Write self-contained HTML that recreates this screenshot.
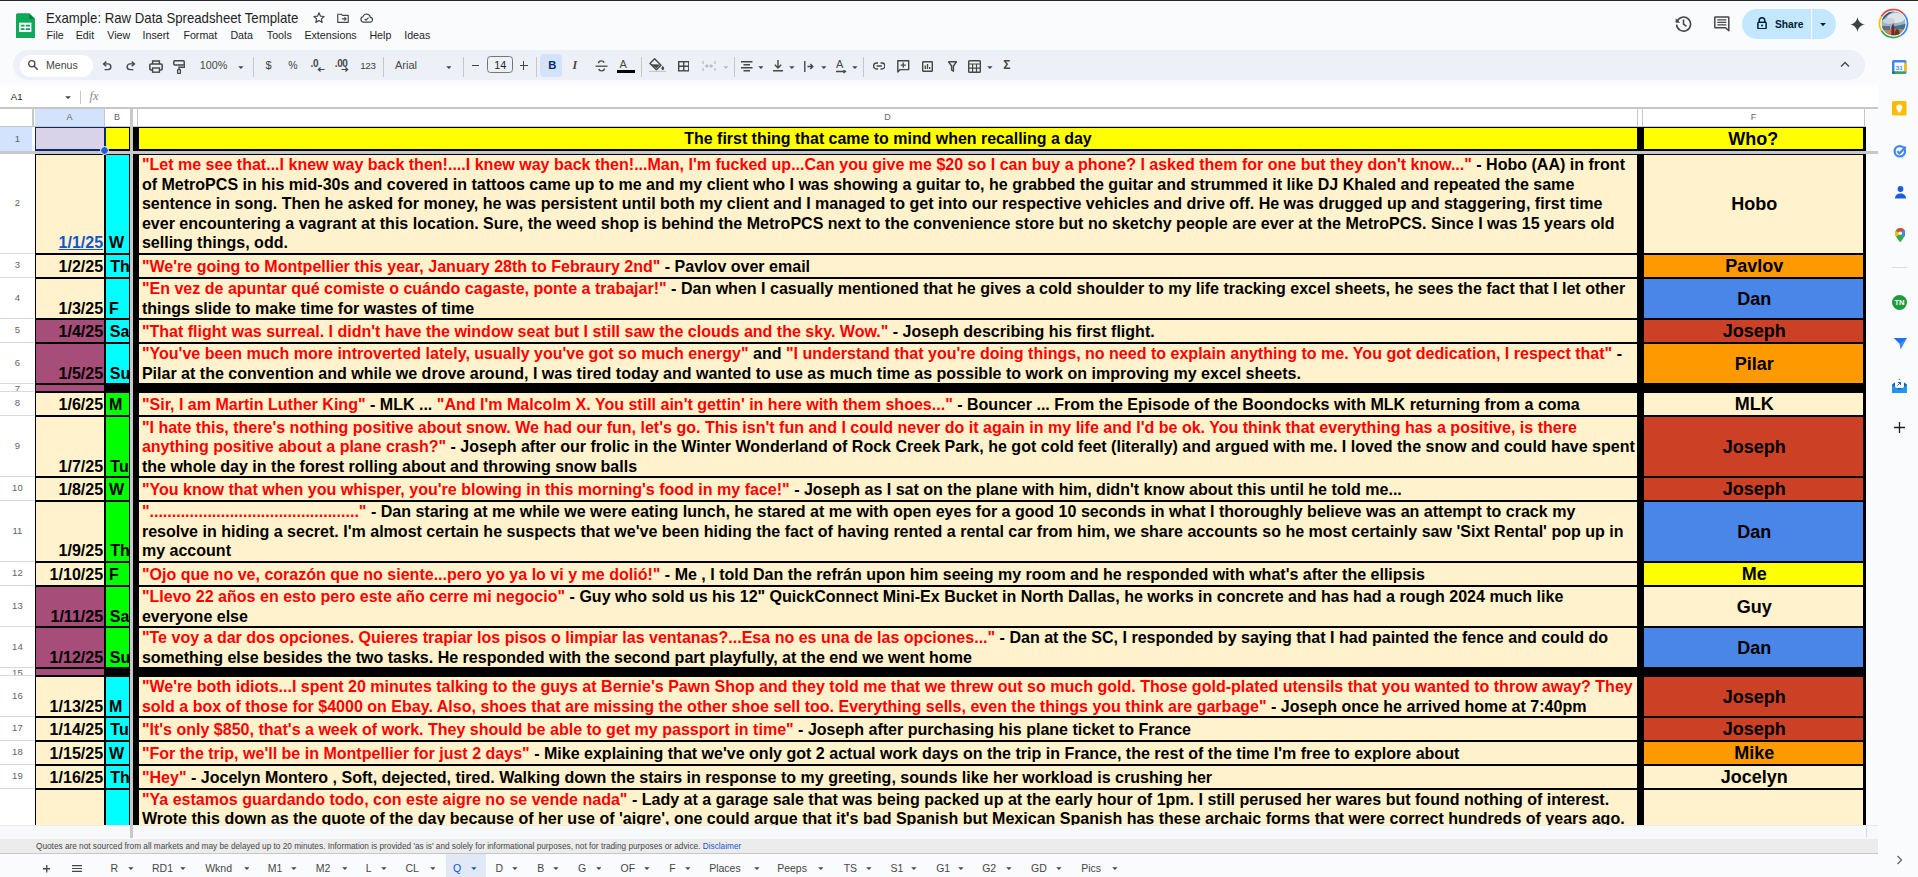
<!DOCTYPE html><html><head><meta charset="utf-8"><style>
*{margin:0;padding:0;box-sizing:border-box}
html,body{width:1918px;height:877px;overflow:hidden;background:#f9fbfd;font-family:"Liberation Sans",sans-serif;position:relative}
.a{position:absolute}
.t{position:absolute;white-space:pre;font-weight:bold;font-size:16.05px;line-height:20px;color:#000}
.r{color:#ff0000}
.rh{position:absolute;left:1.4px;width:32px;text-align:center;font-size:9.5px;color:#5f6368;line-height:12px}
.ch{position:absolute;text-align:center;font-size:9px;color:#5f6368;line-height:12px;top:111px}
.ic{position:absolute}
.tab{position:absolute;top:858.5px;font-size:10.5px;color:#444746;line-height:18px;white-space:pre}
.menu{position:absolute;top:27.8px;font-size:10.7px;color:#1f1f1f;line-height:14px;white-space:pre}
</style></head><body>
<div style="position:absolute;left:0.00px;top:0.00px;width:1918.00px;height:1.10px;background:#25272a;"></div>
<svg class="ic" style="left:16px;top:12.8px" width="19" height="25.6" viewBox="0 0 19.5 26">
<path d="M1.6 0h11.9l6 6v18.4a1.6 1.6 0 0 1-1.6 1.6H1.6A1.6 1.6 0 0 1 0 24.4V1.6A1.6 1.6 0 0 1 1.6 0z" fill="#0fa958"/>
<path d="M13.5 0l6 6h-4.4a1.6 1.6 0 0 1-1.6-1.6z" fill="#087f3f"/>
<path d="M3.2 9.8h12.6v9.6H3.2z" fill="#fff"/>
<path d="M4.9 11.8h3.9v1.9H4.9zM10 11.8h4.3v1.9H10zM4.9 15.5h3.9v1.8H4.9zM10 15.5h4.3v1.8H10z" fill="#0d9f52"/>
</svg>
<div class="a" style="left:46px;top:8.6px;font-size:14.6px;line-height:18px;color:#1f1f1f;white-space:pre;transform-origin:0 0;transform:scaleX(0.905)">Example: Raw Data Spreadsheet Template</div>
<svg class="ic" style="left:312px;top:11px" width="14" height="14" viewBox="0 0 24 24"><path d="M12 3.2l2.6 5.6 6.1.6-4.6 4.1 1.3 6-5.4-3.1-5.4 3.1 1.3-6-4.6-4.1 6.1-.6z" fill="none" stroke="#444746" stroke-width="2" stroke-linejoin="round"/></svg>
<svg class="ic" style="left:336px;top:11px" width="14" height="14" viewBox="0 0 24 24"><path d="M3 5.5h6l2 2h10v12H3z" fill="none" stroke="#444746" stroke-width="2" stroke-linejoin="round"/><path d="M10 13.5h7M14.5 10.5l3 3-3 3" fill="none" stroke="#444746" stroke-width="1.8"/></svg>
<svg class="ic" style="left:359px;top:11px" width="15" height="14" viewBox="0 0 24 24"><path d="M6.5 19h11.5a4 4 0 0 0 .6-8A6.5 6.5 0 0 0 6 9.6 4.8 4.8 0 0 0 6.5 19z" fill="none" stroke="#444746" stroke-width="2"/><path d="M8.8 13.5l2.4 2.4 4.4-4.4" fill="none" stroke="#444746" stroke-width="2"/></svg>
<div class="menu" style="left:46.6px">File</div>
<div class="menu" style="left:75.7px">Edit</div>
<div class="menu" style="left:107.3px">View</div>
<div class="menu" style="left:142.6px">Insert</div>
<div class="menu" style="left:183.4px">Format</div>
<div class="menu" style="left:230.4px">Data</div>
<div class="menu" style="left:266.8px">Tools</div>
<div class="menu" style="left:304.4px">Extensions</div>
<div class="menu" style="left:369.4px">Help</div>
<div class="menu" style="left:404.2px">Ideas</div>
<svg class="ic" style="left:1675px;top:15px" width="17" height="17" viewBox="0 0 17 17"><path d="M2.2 6.2A7 7 0 1 1 1.6 9.6" fill="none" stroke="#444746" stroke-width="1.6"/><path d="M0.6 3.2v4.6h4.6z" fill="#444746"/><path d="M8.5 4.6v4.5l3 2.2" fill="none" stroke="#444746" stroke-width="1.6"/></svg>
<svg class="ic" style="left:1713.5px;top:15.6px" width="16" height="16" viewBox="0 0 16 16"><path d="M1.4 0.9h12.8a0.6 0.6 0 0 1 0.6 0.6v13.3l-3.2-3H1.4a0.6 0.6 0 0 1-0.6-0.6V1.5a0.6 0.6 0 0 1 0.6-0.6z" fill="none" stroke="#444746" stroke-width="1.5" stroke-linejoin="round"/><path d="M3.3 3.8h9M3.3 6.3h9M3.3 8.8h9" stroke="#444746" stroke-width="1.3"/></svg>
<div class="a" style="left:1742px;top:9.2px;width:94px;height:30px;border-radius:15px;background:#c2e7ff"></div>
<div class="a" style="left:1811px;top:9.2px;width:1px;height:30px;background:#f9fbfd"></div>
<svg class="ic" style="left:1756.5px;top:16.8px" width="10" height="12.4" viewBox="0 0 10 12.4"><path d="M2.2 5.4V3.6a2.8 2.8 0 0 1 5.6 0v1.8" fill="none" stroke="#001d35" stroke-width="1.5"/><rect x="0.9" y="5.3" width="8.2" height="6.4" rx="0.8" fill="none" stroke="#001d35" stroke-width="1.5"/><circle cx="5" cy="8.5" r="1" fill="#001d35"/></svg>
<div class="a" style="left:1775px;top:17px;font-size:10.8px;line-height:14px;color:#001d35;font-weight:bold;transform-origin:0 0;transform:scaleX(0.95)">Share</div>
<svg class="ic" style="left:1819.8px;top:22.6px" width="6" height="3.4" viewBox="0 0 6 3.4"><path d="M0.1 0.1h5.8L3 3.2z" fill="#001d35"/></svg>
<svg class="ic" style="left:1849.5px;top:16.5px" width="15" height="15" viewBox="0 0 24 24"><path d="M12 0C12.8 6.6 17.4 11.2 24 12 17.4 12.8 12.8 17.4 12 24 11.2 17.4 6.6 12.8 0 12 6.6 11.2 11.2 6.6 12 0z" fill="#3c4043"/></svg>
<svg class="ic" style="left:1877.6px;top:8.4px" width="31" height="31" viewBox="0 0 31 31">
<defs><clipPath id="av"><circle cx="15.5" cy="15.5" r="11.9"/></clipPath></defs>
<path d="M3.38 8.50A14.0 14.0 0 0 1 25.40 5.60" stroke="#ea4335" stroke-width="1.7" fill="none"/><path d="M25.40 5.60A14.0 14.0 0 0 1 22.50 27.62" stroke="#4285f4" stroke-width="1.7" fill="none"/><path d="M22.50 27.62A14.0 14.0 0 0 1 3.38 22.50" stroke="#34a853" stroke-width="1.7" fill="none"/><path d="M3.38 22.50A14.0 14.0 0 0 1 3.38 8.50" stroke="#fbbc04" stroke-width="1.7" fill="none"/>
<g clip-path="url(#av)">
<rect x="0" y="0" width="31" height="31" fill="#9fb3c2"/>
<path d="M2 12C4 6 9 3 17 3 12 5 8 8 5 12z" fill="#1f5f8f"/>
<ellipse cx="18" cy="10" rx="9" ry="5" fill="#dfe4e8"/>
<ellipse cx="11" cy="13" rx="6" ry="3" fill="#c8d2d8"/>
<path d="M13 19L31 15v6H13z" fill="#3b7598"/>
<path d="M0 21h31v10H0z" fill="#c4805a"/>
<path d="M0 18h12v4H0z" fill="#5b6f86"/>
<path d="M13.2 27l0.6-9 1.3-2.5 1.1 2.5 0.3 9z" fill="#7b2430"/>
<path d="M16 27l2-6 3 1 1 5z" fill="#5a3a20"/>
</g></svg>
<div class="a" style="left:12.5px;top:50.3px;width:1852.5px;height:29.9px;border-radius:15px;background:#edf1f7"></div>
<div class="a" style="left:20px;top:54.5px;width:72.5px;height:22px;border-radius:11px;background:#ffffff"></div>
<svg class="ic" style="left:26.5px;top:59px" width="12" height="12" viewBox="0 0 24 24"><circle cx="9.5" cy="9.5" r="6.2" fill="none" stroke="#444746" stroke-width="2.6"/><path d="M14 14l7.5 7.5" stroke="#444746" stroke-width="2.8"/></svg>
<div class="a" style="left:46px;top:59px;font-size:10.6px;line-height:13px;color:#444746">Menus</div>
<svg class="ic" style="left:102.3px;top:61.4px" width="10" height="10" viewBox="0 0 10 10"><path d="M1.8 2.9h4.2a2.85 2.85 0 0 1 0 5.7H2.6" fill="none" stroke="#444746" stroke-width="1.4"/><path d="M4.3 0.6L1.6 2.9l2.7 2.3" fill="none" stroke="#444746" stroke-width="1.4"/></svg>
<svg class="ic" style="left:125.8px;top:61.4px" width="10" height="10" viewBox="0 0 10 10"><path d="M8.2 2.9H4a2.85 2.85 0 0 0 0 5.7h3.4" fill="none" stroke="#444746" stroke-width="1.4"/><path d="M5.7 0.6l2.7 2.3-2.7 2.3" fill="none" stroke="#444746" stroke-width="1.4"/></svg>
<svg class="ic" style="left:148.5px;top:59.5px" width="14" height="13" viewBox="0 0 14 13"><path d="M3.6 4V1h6.8v3" fill="none" stroke="#444746" stroke-width="1.4"/><rect x="0.8" y="4" width="12.4" height="6" rx="1.2" fill="none" stroke="#444746" stroke-width="1.5"/><rect x="3.6" y="8" width="6.8" height="4.2" fill="#edf1f7" stroke="#444746" stroke-width="1.4"/></svg>
<svg class="ic" style="left:173px;top:59.5px" width="12" height="14" viewBox="0 0 12 14"><rect x="0.8" y="0.8" width="10.4" height="4.2" rx="0.8" fill="none" stroke="#444746" stroke-width="1.4"/><path d="M11.2 3H11.8V7.2H6v2.6" fill="none" stroke="#444746" stroke-width="1.4"/><rect x="4.6" y="9.6" width="2.8" height="3.8" rx="0.5" fill="none" stroke="#444746" stroke-width="1.3"/></svg>
<div class="a" style="left:199.8px;top:59.4px;font-size:10.8px;line-height:13px;color:#444746">100%</div>
<svg class="ic" style="left:237.8px;top:65.6px" width="5.8" height="3.1" viewBox="0 0 5.8 3.1"><path d="M0.2 0.2h5.40l-2.70 2.70z" fill="#444746"/></svg>
<div class="a" style="left:253px;top:57px;width:1px;height:20px;background:#c7c7c7"></div>
<div class="a" style="left:383px;top:57px;width:1px;height:20px;background:#c7c7c7"></div>
<div class="a" style="left:463.3px;top:57px;width:1px;height:20px;background:#c7c7c7"></div>
<div class="a" style="left:536px;top:57px;width:1px;height:20px;background:#c7c7c7"></div>
<div class="a" style="left:641px;top:57px;width:1px;height:20px;background:#c7c7c7"></div>
<div class="a" style="left:733.5px;top:57px;width:1px;height:20px;background:#c7c7c7"></div>
<div class="a" style="left:863px;top:57px;width:1px;height:20px;background:#c7c7c7"></div>
<div class="a" style="left:265.6px;top:58.8px;font-size:11px;line-height:13px;color:#3c4043;font-weight:normal">$</div>
<div class="a" style="left:288.2px;top:58.6px;font-size:10.5px;line-height:13px;color:#3c4043;font-weight:normal">%</div>
<div class="a" style="left:310.5px;top:57.5px;font-size:10px;line-height:12px;color:#444746;font-weight:bold;letter-spacing:-0.3px">.0</div>
<svg class="ic" style="left:317px;top:66.5px" width="8" height="5" viewBox="0 0 8 5"><path d="M7.5 2.5H1.5M3.6 0.5L1.3 2.5l2.3 2" fill="none" stroke="#444746" stroke-width="1.2"/></svg>
<div class="a" style="left:334.8px;top:57.5px;font-size:10px;line-height:12px;color:#444746;font-weight:bold;letter-spacing:-0.4px">.00</div>
<svg class="ic" style="left:341px;top:66.5px" width="8" height="5" viewBox="0 0 8 5"><path d="M0.5 2.5h6M4.4 0.5l2.3 2-2.3 2" fill="none" stroke="#444746" stroke-width="1.2"/></svg>
<div class="a" style="left:360.2px;top:59.5px;font-size:9.8px;line-height:12px;color:#3c4043;font-weight:normal;letter-spacing:-0.3px">123</div>
<div class="a" style="left:395px;top:59.4px;font-size:11px;line-height:13px;color:#444746">Arial</div>
<svg class="ic" style="left:445.6px;top:65.6px" width="5.8" height="3.1" viewBox="0 0 5.8 3.1"><path d="M0.2 0.2h5.40l-2.70 2.70z" fill="#444746"/></svg>
<div class="a" style="left:471.5px;top:65px;width:7.5px;height:1.4px;background:#444746"></div>
<div class="a" style="left:487.2px;top:56.3px;width:26px;height:17.2px;border:1px solid #747775;border-radius:3.5px"></div>
<div class="a" style="left:487.2px;top:58.8px;width:26px;text-align:center;font-size:10.8px;line-height:13px;color:#1f1f1f">14</div>
<div class="a" style="left:519.8px;top:65px;width:8px;height:1.4px;background:#444746"></div><div class="a" style="left:523.1px;top:61.3px;width:1.4px;height:8.3px;background:#444746"></div>
<div class="a" style="left:540px;top:54.4px;width:22.2px;height:22.2px;border-radius:4px;background:#d3e3fd"></div>
<div class="a" style="left:548.2px;top:59.2px;font-size:11.2px;line-height:13px;color:#0b2a6b;font-weight:bold">B</div>
<div class="a" style="left:572.5px;top:59.2px;font-size:12px;line-height:13px;color:#444746;font-style:italic;font-family:'Liberation Serif',serif;font-weight:bold">I</div>
<svg class="ic" style="left:594.5px;top:59.5px" width="13" height="12" viewBox="0 0 13 12"><path d="M0.5 6.2h12" stroke="#444746" stroke-width="1.3"/><path d="M9.2 2.6C8.6 1.4 7.5 0.9 6.3 0.9 4.6 0.9 3.5 1.8 3.5 3.2M3.6 9c.5 1.2 1.6 1.9 2.9 1.9 1.7 0 2.9-.9 2.9-2.3" fill="none" stroke="#444746" stroke-width="1.4"/></svg>
<div class="a" style="left:619.4px;top:57.5px;font-size:11px;line-height:13px;color:#444746">A</div>
<div class="a" style="left:617px;top:70.2px;width:18px;height:2.4px;background:#000"></div>
<svg class="ic" style="left:649px;top:58px" width="17" height="15" viewBox="0 0 17 15"><path d="M5.6 0.8l6.4 6.4-4.6 4.6L1 5.4z" fill="none" stroke="#444746" stroke-width="1.4" stroke-linejoin="round"/><path d="M1.8 6.2l9.6 0.2-4 3.8z" fill="#444746"/><path d="M13.8 7.8c.9 1.3 1.4 2.1 1.4 2.7a1.4 1.4 0 0 1-2.8 0c0-.6.5-1.4 1.4-2.7z" fill="#444746"/><path d="M0 13.4h17" stroke="#c7c7c7" stroke-width="1.2"/></svg>
<svg class="ic" style="left:677.5px;top:61px" width="11.5" height="10.5" viewBox="0 0 11.5 10.5"><rect x="0.7" y="0.7" width="10.1" height="9.1" fill="none" stroke="#444746" stroke-width="1.4"/><path d="M5.75 0.7v9.1M0.7 5.25h10.1" stroke="#444746" stroke-width="1.4"/></svg>
<svg class="ic" style="left:702px;top:60px" width="14" height="12" viewBox="0 0 14 12"><path d="M1 1v3M1 8v3M13 1v3M13 8v3M3 6h3M8 6h3M4.5 4.5L6 6 4.5 7.5M9.5 4.5L8 6l1.5 1.5" fill="none" stroke="#b9bcc1" stroke-width="1.3"/></svg>
<svg class="ic" style="left:722.5px;top:65.6px" width="5.8" height="3.1" viewBox="0 0 5.8 3.1"><path d="M0.2 0.2h5.40l-2.70 2.70z" fill="#b9bcc1"/></svg>
<svg class="ic" style="left:741px;top:60.5px" width="11.5" height="11" viewBox="0 0 11.5 11"><path d="M0 0.8h11.5M2.5 3.8h6.5M0 6.8h11.5M2.5 9.8h6.5" stroke="#444746" stroke-width="1.4"/></svg>
<svg class="ic" style="left:757.5px;top:65.6px" width="5.8" height="3.1" viewBox="0 0 5.8 3.1"><path d="M0.2 0.2h5.40l-2.70 2.70z" fill="#444746"/></svg>
<svg class="ic" style="left:773px;top:60px" width="10" height="12" viewBox="0 0 10 12"><path d="M5 0v7.8M1.8 4.8L5 8l3.2-3.2M0 10.8h10" fill="none" stroke="#444746" stroke-width="1.4"/></svg>
<svg class="ic" style="left:788.8px;top:65.6px" width="5.8" height="3.1" viewBox="0 0 5.8 3.1"><path d="M0.2 0.2h5.40l-2.70 2.70z" fill="#444746"/></svg>
<svg class="ic" style="left:804px;top:60.5px" width="10" height="11" viewBox="0 0 10 11"><path d="M0.8 0v11M3.5 5.5h5M6.3 3l2.5 2.5-2.5 2.5" fill="none" stroke="#444746" stroke-width="1.4"/></svg>
<svg class="ic" style="left:820.5px;top:65.6px" width="5.8" height="3.1" viewBox="0 0 5.8 3.1"><path d="M0.2 0.2h5.40l-2.70 2.70z" fill="#444746"/></svg>
<div class="a" style="left:836px;top:58px;font-size:11px;line-height:13px;color:#444746">A</div>
<svg class="ic" style="left:836px;top:69.5px" width="11" height="4" viewBox="0 0 11 4"><path d="M0 1.5h9M7.5 0l2 1.5-2 1.5" fill="none" stroke="#444746" stroke-width="1.3"/></svg>
<svg class="ic" style="left:851.8px;top:65.6px" width="5.8" height="3.1" viewBox="0 0 5.8 3.1"><path d="M0.2 0.2h5.40l-2.70 2.70z" fill="#444746"/></svg>
<svg class="ic" style="left:872.5px;top:62px" width="12.5" height="8" viewBox="0 0 12.5 8"><path d="M5 1H3.6a3 3 0 0 0 0 6H5M7.5 1h1.4a3 3 0 0 1 0 6H7.5M3.6 4h5.3" fill="none" stroke="#444746" stroke-width="1.4"/></svg>
<svg class="ic" style="left:897px;top:59.5px" width="12.5" height="13" viewBox="0 0 12.5 13"><path d="M0.8 0.8h10.9v8.8H3.2L0.8 12z" fill="none" stroke="#444746" stroke-width="1.4" stroke-linejoin="round"/><path d="M6.25 2.6v5.2M3.65 5.2h5.2" stroke="#444746" stroke-width="1.3"/></svg>
<svg class="ic" style="left:922px;top:60.5px" width="11" height="11" viewBox="0 0 11 11"><rect x="0.7" y="0.7" width="9.6" height="9.6" rx="0.6" fill="none" stroke="#444746" stroke-width="1.4"/><path d="M3.3 4.5v3.6M5.5 3v5.1M7.7 6v2.1" stroke="#444746" stroke-width="1.3"/></svg>
<svg class="ic" style="left:947.5px;top:60.5px" width="9" height="11" viewBox="0 0 9 11"><path d="M0.6 0.8h7.8L5.4 5v5.2L3.6 9V5z" fill="none" stroke="#444746" stroke-width="1.4" stroke-linejoin="round"/></svg>
<svg class="ic" style="left:968px;top:60px" width="13" height="13" viewBox="0 0 13 13"><rect x="0.7" y="0.7" width="11.6" height="11.6" rx="0.8" fill="none" stroke="#444746" stroke-width="1.4"/><path d="M0.7 4h11.6M4.6 4v8.3M8.5 4v8.3M0.7 8.2h11.6" stroke="#444746" stroke-width="1.2"/></svg>
<svg class="ic" style="left:986.8px;top:65.6px" width="5.8" height="3.1" viewBox="0 0 5.8 3.1"><path d="M0.2 0.2h5.40l-2.70 2.70z" fill="#444746"/></svg>
<div class="a" style="left:1003.3px;top:59px;font-size:12px;line-height:13px;color:#444746;font-weight:bold">&#931;</div>
<svg class="ic" style="left:1840px;top:61px" width="10" height="7" viewBox="0 0 10 7"><path d="M1 5.5l4-4 4 4" fill="none" stroke="#444746" stroke-width="1.4"/></svg>
<div style="position:absolute;left:0.00px;top:85.00px;width:1878.00px;height:22.00px;background:#ffffff;"></div>
<div class="a" style="left:10.8px;top:90.6px;font-size:9.6px;line-height:12px;color:#1f1f1f">A1</div>
<svg class="ic" style="left:65.2px;top:95.9px" width="6.2" height="3.3" viewBox="0 0 6.2 3.3"><path d="M0.2 0.2h5.80l-2.90 2.90z" fill="#444746"/></svg>
<div class="a" style="left:80.2px;top:91px;width:1px;height:12.6px;background:#c7c7c7"></div>
<div class="a" style="left:89.5px;top:88.5px;font-size:12.4px;line-height:15px;color:#8c8c8c;font-style:italic;font-family:'Liberation Serif',serif">fx</div>
<svg class="ic" style="left:1892px;top:59.6px" width="14.5" height="14" viewBox="0 0 14.5 14"><rect x="0" y="0" width="14.5" height="14" rx="1.5" fill="#4285f4"/><rect x="2.5" y="2.5" width="9.5" height="9" fill="#fff"/><rect x="12" y="2.5" width="2.5" height="9" fill="#fbbc04"/><rect x="2.5" y="11.5" width="9.5" height="2.5" fill="#34a853"/><path d="M0 11.5h2.5V14H1.5A1.5 1.5 0 0 1 0 12.5z" fill="#188038"/><text x="7.2" y="10" font-size="6.2" font-family="Liberation Sans" text-anchor="middle" fill="#4285f4" font-weight="bold">31</text></svg>
<svg class="ic" style="left:1892px;top:101.4px" width="14.5" height="14.5" viewBox="0 0 14.5 14.5"><rect x="0" y="0" width="14.5" height="14.5" rx="1.6" fill="#fbbc04"/><circle cx="7.25" cy="6.5" r="3" fill="#fff"/><rect x="5.8" y="9" width="2.9" height="2.3" fill="#fff"/></svg>
<svg class="ic" style="left:1892.5px;top:144px" width="14" height="14" viewBox="0 0 14 14"><circle cx="6.8" cy="7.3" r="5.2" fill="none" stroke="#4285f4" stroke-width="2.2"/><path d="M4.3 7.2l2.2 2.2 6.2-6.6" fill="none" stroke="#4285f4" stroke-width="2.2"/></svg>
<svg class="ic" style="left:1894.5px;top:186px" width="11" height="13" viewBox="0 0 11 13"><circle cx="5.5" cy="3" r="2.9" fill="#1a5fd8"/><path d="M0 12.6c0-3.2 2.4-5 5.5-5s5.5 1.8 5.5 5z" fill="#1a5fd8"/></svg>
<svg class="ic" style="left:1894.5px;top:227.5px" width="10.5" height="14.5" viewBox="0 0 10.5 14.5"><path d="M5.25 14.5C3 11 0 8.5 0 5.25a5.25 5.25 0 0 1 10.5 0C10.5 8.5 7.5 11 5.25 14.5z" fill="#34a853"/><path d="M1.4 2A5.25 5.25 0 0 1 9 1.5L5.25 5.25z" fill="#ea4335"/><path d="M9 1.5A5.25 5.25 0 0 1 10.5 5.25C10.5 6.5 10 7.7 9.2 8.8L5.25 5.25z" fill="#4285f4"/><path d="M0.6 3L5.25 5.25 1.4 8.8C.6 7.8 0 6.5 0 5.25 0 4.4.2 3.7.6 3z" fill="#fbbc04"/><circle cx="5.25" cy="5.25" r="1.8" fill="#fff"/></svg>
<div style="position:absolute;left:1892.00px;top:267.00px;width:15.00px;height:1.00px;background:#dadce0;"></div>
<svg class="ic" style="left:1892px;top:294.5px" width="15" height="15" viewBox="0 0 15 15"><circle cx="7.5" cy="7.5" r="7.5" fill="#1e9c3b"/><text x="7.5" y="10.4" font-size="7.6" font-family="Liberation Sans" text-anchor="middle" fill="#fff" font-weight="bold">TN</text></svg>
<svg class="ic" style="left:1893.5px;top:337.5px" width="13" height="11.5" viewBox="0 0 13 11.5"><path d="M0 0h13L6.5 11.5 5.5 5.5z" fill="#4285f4"/><path d="M0 0l5.5 5.5L13 0z" fill="#1a73e8"/></svg>
<svg class="ic" style="left:1892px;top:378px" width="15" height="15" viewBox="0 0 15 15"><path d="M0 6.5L7.5 1 15 6.5V15H0z" fill="#1565c0"/><rect x="3" y="2" width="9" height="8" fill="#fff"/><path d="M5.5 7.5l3-3M6 4.5h2.5V7" fill="none" stroke="#1565c0" stroke-width="1"/><path d="M0 7l7.5 5L15 7v8H0z" fill="#2196f3"/></svg>
<svg class="ic" style="left:1894px;top:422px" width="11" height="11" viewBox="0 0 11 11"><path d="M5.5 0v11M0 5.5h11" stroke="#1f1f1f" stroke-width="1.3"/></svg>
<svg class="ic" style="left:1896px;top:855px" width="7" height="10" viewBox="0 0 7 10"><path d="M1.5 1l4 4-4 4" fill="none" stroke="#5f6368" stroke-width="1.3"/></svg>
<div style="position:absolute;left:0.00px;top:825.00px;width:1878.00px;height:13.50px;background:#f8f9fa;"></div>
<div style="position:absolute;left:0.00px;top:838.50px;width:1878.00px;height:0.80px;background:#dadce0;"></div>
<div style="position:absolute;left:0.00px;top:825.00px;width:1878.00px;height:0.80px;background:#e8eaed;"></div>
<div style="position:absolute;left:1866.00px;top:825.00px;width:1.00px;height:12.50px;background:#dadce0;"></div>
<div style="position:absolute;left:0.00px;top:839.30px;width:1878.00px;height:14.00px;background:#ececec;"></div>
<div style="position:absolute;left:0.00px;top:853.20px;width:1878.00px;height:0.80px;background:#c7c7c7;"></div>
<div class="a" style="left:36px;top:841.5px;font-size:8.25px;line-height:10px;color:#444746;white-space:pre">Quotes are not sourced from all markets and may be delayed up to 20 minutes. Information is provided 'as is' and solely for informational purposes, not for trading purposes or advice. <span style="color:#1a55c8">Disclaimer</span></div>
<svg class="ic" style="left:42.5px;top:865px" width="7.5" height="7.5" viewBox="0 0 7.5 7.5"><path d="M3.75 0v7.5M0 3.75h7.5" stroke="#444746" stroke-width="1.3"/></svg>
<svg class="ic" style="left:71.5px;top:864.5px" width="10.5" height="7" viewBox="0 0 10.5 7"><path d="M0 0.6h10.5M0 3.5h10.5M0 6.4h10.5" stroke="#444746" stroke-width="1.2"/></svg>
<div class="a" style="left:445.6px;top:854px;width:40.7px;height:23px;background:#e1e9f7"></div>
<div class="tab" style="left:110.5px;color:#444746">R</div>
<svg class="ic" style="left:127.8px;top:867px" width="5.8" height="3.1" viewBox="0 0 5.8 3.1"><path d="M0.2 0.2h5.40l-2.70 2.70z" fill="#444746"/></svg>
<div class="tab" style="left:152.0px;color:#444746">RD1</div>
<svg class="ic" style="left:180.2px;top:867px" width="5.8" height="3.1" viewBox="0 0 5.8 3.1"><path d="M0.2 0.2h5.40l-2.70 2.70z" fill="#444746"/></svg>
<div class="tab" style="left:205.2px;color:#444746">Wknd</div>
<svg class="ic" style="left:243.6px;top:867px" width="5.8" height="3.1" viewBox="0 0 5.8 3.1"><path d="M0.2 0.2h5.40l-2.70 2.70z" fill="#444746"/></svg>
<div class="tab" style="left:267.8px;color:#444746">M1</div>
<svg class="ic" style="left:291.3px;top:867px" width="5.8" height="3.1" viewBox="0 0 5.8 3.1"><path d="M0.2 0.2h5.40l-2.70 2.70z" fill="#444746"/></svg>
<div class="tab" style="left:315.8px;color:#444746">M2</div>
<svg class="ic" style="left:341.6px;top:867px" width="5.8" height="3.1" viewBox="0 0 5.8 3.1"><path d="M0.2 0.2h5.40l-2.70 2.70z" fill="#444746"/></svg>
<div class="tab" style="left:365.8px;color:#444746">L</div>
<svg class="ic" style="left:380.9px;top:867px" width="5.8" height="3.1" viewBox="0 0 5.8 3.1"><path d="M0.2 0.2h5.40l-2.70 2.70z" fill="#444746"/></svg>
<div class="tab" style="left:405.5px;color:#444746">CL</div>
<svg class="ic" style="left:429.5px;top:867px" width="5.8" height="3.1" viewBox="0 0 5.8 3.1"><path d="M0.2 0.2h5.40l-2.70 2.70z" fill="#444746"/></svg>
<div class="tab" style="left:453.0px;color:#0b57d0">Q</div>
<svg class="ic" style="left:471.3px;top:867px" width="5.8" height="3.1" viewBox="0 0 5.8 3.1"><path d="M0.2 0.2h5.40l-2.70 2.70z" fill="#0b57d0"/></svg>
<div class="tab" style="left:495.5px;color:#444746">D</div>
<svg class="ic" style="left:512px;top:867px" width="5.8" height="3.1" viewBox="0 0 5.8 3.1"><path d="M0.2 0.2h5.40l-2.70 2.70z" fill="#444746"/></svg>
<div class="tab" style="left:537.2px;color:#444746">B</div>
<svg class="ic" style="left:553px;top:867px" width="5.8" height="3.1" viewBox="0 0 5.8 3.1"><path d="M0.2 0.2h5.40l-2.70 2.70z" fill="#444746"/></svg>
<div class="tab" style="left:578.0px;color:#444746">G</div>
<svg class="ic" style="left:595.6px;top:867px" width="5.8" height="3.1" viewBox="0 0 5.8 3.1"><path d="M0.2 0.2h5.40l-2.70 2.70z" fill="#444746"/></svg>
<div class="tab" style="left:620.5px;color:#444746">OF</div>
<svg class="ic" style="left:644px;top:867px" width="5.8" height="3.1" viewBox="0 0 5.8 3.1"><path d="M0.2 0.2h5.40l-2.70 2.70z" fill="#444746"/></svg>
<div class="tab" style="left:669.2px;color:#444746">F</div>
<svg class="ic" style="left:684.5px;top:867px" width="5.8" height="3.1" viewBox="0 0 5.8 3.1"><path d="M0.2 0.2h5.40l-2.70 2.70z" fill="#444746"/></svg>
<div class="tab" style="left:709.2px;color:#444746">Places</div>
<svg class="ic" style="left:753.8px;top:867px" width="5.8" height="3.1" viewBox="0 0 5.8 3.1"><path d="M0.2 0.2h5.40l-2.70 2.70z" fill="#444746"/></svg>
<div class="tab" style="left:777.2px;color:#444746">Peeps</div>
<svg class="ic" style="left:817.5px;top:867px" width="5.8" height="3.1" viewBox="0 0 5.8 3.1"><path d="M0.2 0.2h5.40l-2.70 2.70z" fill="#444746"/></svg>
<div class="tab" style="left:843.7px;color:#444746">TS</div>
<svg class="ic" style="left:866.3px;top:867px" width="5.8" height="3.1" viewBox="0 0 5.8 3.1"><path d="M0.2 0.2h5.40l-2.70 2.70z" fill="#444746"/></svg>
<div class="tab" style="left:890.5px;color:#444746">S1</div>
<svg class="ic" style="left:911.3px;top:867px" width="5.8" height="3.1" viewBox="0 0 5.8 3.1"><path d="M0.2 0.2h5.40l-2.70 2.70z" fill="#444746"/></svg>
<div class="tab" style="left:936.2px;color:#444746">G1</div>
<svg class="ic" style="left:958px;top:867px" width="5.8" height="3.1" viewBox="0 0 5.8 3.1"><path d="M0.2 0.2h5.40l-2.70 2.70z" fill="#444746"/></svg>
<div class="tab" style="left:982.2px;color:#444746">G2</div>
<svg class="ic" style="left:1006.3px;top:867px" width="5.8" height="3.1" viewBox="0 0 5.8 3.1"><path d="M0.2 0.2h5.40l-2.70 2.70z" fill="#444746"/></svg>
<div class="tab" style="left:1031.0px;color:#444746">GD</div>
<svg class="ic" style="left:1056.3px;top:867px" width="5.8" height="3.1" viewBox="0 0 5.8 3.1"><path d="M0.2 0.2h5.40l-2.70 2.70z" fill="#444746"/></svg>
<div class="tab" style="left:1081.2px;color:#444746">Pics</div>
<svg class="ic" style="left:1112px;top:867px" width="5.8" height="3.1" viewBox="0 0 5.8 3.1"><path d="M0.2 0.2h5.40l-2.70 2.70z" fill="#444746"/></svg>
<div style="position:absolute;left:0.00px;top:108.00px;width:1878.00px;height:717.00px;background:#ffffff;"></div>
<div style="position:absolute;left:0.00px;top:107.00px;width:1878.00px;height:1.60px;background:#c7c7c7;"></div>
<div style="position:absolute;left:34.50px;top:108.60px;width:70.00px;height:17.80px;background:#d3e3fd;"></div>
<div style="position:absolute;left:0.00px;top:126.40px;width:32.20px;height:24.40px;background:#d3e3fd;"></div>
<div style="position:absolute;left:0.00px;top:125.80px;width:1866.00px;height:0.90px;background:#c7c7c7;"></div>
<div style="position:absolute;left:32.20px;top:108.00px;width:2.30px;height:18.40px;background:#c7c7c7;"></div>
<div style="position:absolute;left:104.40px;top:108.60px;width:0.80px;height:18.00px;background:#c7c7c7;"></div>
<div style="position:absolute;left:137.20px;top:108.60px;width:0.80px;height:18.00px;background:#c7c7c7;"></div>
<div style="position:absolute;left:1637.30px;top:108.60px;width:0.80px;height:18.00px;background:#c7c7c7;"></div>
<div style="position:absolute;left:1642.00px;top:108.60px;width:0.80px;height:18.00px;background:#c7c7c7;"></div>
<div style="position:absolute;left:1863.60px;top:108.60px;width:0.80px;height:18.00px;background:#c7c7c7;"></div>
<div class="ch" style="left:34.5px;width:70px">A</div>
<div class="ch" style="left:105px;width:24px">B</div>
<div class="ch" style="left:138px;width:1499px">D</div>
<div class="ch" style="left:1643px;width:221px">F</div>
<div class="rh" style="top:132.90px">1</div>
<div style="position:absolute;left:0.00px;top:153.25px;width:34.30px;height:1.00px;background:#d9d9d9;"></div>
<div class="rh" style="top:197.30px">2</div>
<div style="position:absolute;left:0.00px;top:253.45px;width:34.30px;height:1.00px;background:#d9d9d9;"></div>
<div class="rh" style="top:259.35px">3</div>
<div style="position:absolute;left:0.00px;top:277.35px;width:34.30px;height:1.00px;background:#d9d9d9;"></div>
<div class="rh" style="top:291.75px">4</div>
<div style="position:absolute;left:0.00px;top:318.25px;width:34.30px;height:1.00px;background:#d9d9d9;"></div>
<div class="rh" style="top:324.15px">5</div>
<div style="position:absolute;left:0.00px;top:342.15px;width:34.30px;height:1.00px;background:#d9d9d9;"></div>
<div class="rh" style="top:356.65px">6</div>
<div style="position:absolute;left:0.00px;top:383.25px;width:34.30px;height:1.00px;background:#d9d9d9;"></div>
<div class="a" style="left:0;top:384.20px;width:32px;height:7.00px;overflow:hidden"><div class="rh" style="top:-0.80px;left:1.4px">7</div></div>
<div style="position:absolute;left:0.00px;top:390.85px;width:34.30px;height:1.00px;background:#d9d9d9;"></div>
<div class="rh" style="top:396.95px">8</div>
<div style="position:absolute;left:0.00px;top:415.15px;width:34.30px;height:1.00px;background:#d9d9d9;"></div>
<div class="rh" style="top:439.65px">9</div>
<div style="position:absolute;left:0.00px;top:476.25px;width:34.30px;height:1.00px;background:#d9d9d9;"></div>
<div class="rh" style="top:482.20px">10</div>
<div style="position:absolute;left:0.00px;top:500.25px;width:34.30px;height:1.00px;background:#d9d9d9;"></div>
<div class="rh" style="top:524.75px">11</div>
<div style="position:absolute;left:0.00px;top:561.35px;width:34.30px;height:1.00px;background:#d9d9d9;"></div>
<div class="rh" style="top:567.30px">12</div>
<div style="position:absolute;left:0.00px;top:585.35px;width:34.30px;height:1.00px;background:#d9d9d9;"></div>
<div class="rh" style="top:599.70px">13</div>
<div style="position:absolute;left:0.00px;top:626.15px;width:34.30px;height:1.00px;background:#d9d9d9;"></div>
<div class="rh" style="top:640.50px">14</div>
<div style="position:absolute;left:0.00px;top:666.95px;width:34.30px;height:1.00px;background:#d9d9d9;"></div>
<div class="a" style="left:0;top:667.90px;width:32px;height:7.40px;overflow:hidden"><div class="rh" style="top:-0.60px;left:1.4px">15</div></div>
<div style="position:absolute;left:0.00px;top:674.95px;width:34.30px;height:1.00px;background:#d9d9d9;"></div>
<div class="rh" style="top:689.65px">16</div>
<div style="position:absolute;left:0.00px;top:716.45px;width:34.30px;height:1.00px;background:#d9d9d9;"></div>
<div class="rh" style="top:722.40px">17</div>
<div style="position:absolute;left:0.00px;top:740.45px;width:34.30px;height:1.00px;background:#d9d9d9;"></div>
<div class="rh" style="top:746.35px">18</div>
<div style="position:absolute;left:0.00px;top:764.35px;width:34.30px;height:1.00px;background:#d9d9d9;"></div>
<div class="rh" style="top:770.30px">19</div>
<div style="position:absolute;left:0.00px;top:788.35px;width:34.30px;height:1.00px;background:#d9d9d9;"></div>
<div style="position:absolute;left:34.50px;top:126.80px;width:1831.40px;height:24.00px;background:#000;"></div>
<div style="position:absolute;left:36.30px;top:128.20px;width:67.90px;height:21.20px;background:#d9d2e9;"></div>
<div style="position:absolute;left:106.20px;top:128.20px;width:23.00px;height:21.20px;background:#ffff00;"></div>
<div style="position:absolute;left:139.00px;top:128.20px;width:1498.00px;height:21.20px;background:#ffff00;"></div>
<div style="position:absolute;left:1643.60px;top:128.20px;width:219.50px;height:21.20px;background:#ffff00;"></div>
<div style="position:absolute;left:130.00px;top:108.60px;width:3.30px;height:729.40px;background:#c8c8c8;"></div>
<div style="position:absolute;left:0.00px;top:150.80px;width:1878.00px;height:2.80px;background:#c8c8c8;"></div>
<div class="t" style="left:139.0px;width:1498.0px;top:128.8px;text-align:center;line-height:20px;font-size:15.95px">The first thing that came to mind when recalling a day</div>
<div class="t" style="left:1643.6px;width:219.5px;top:128.1px;text-align:center;font-size:18px;line-height:22px">Who?</div>
<div style="position:absolute;left:34.50px;top:126.80px;width:70.70px;height:1.60px;background:#0b2a6b;"></div>
<div style="position:absolute;left:34.50px;top:149.00px;width:70.70px;height:1.80px;background:#0b2a6b;"></div>
<div style="position:absolute;left:34.50px;top:126.80px;width:1.80px;height:24.00px;background:#0b2a6b;"></div>
<div style="position:absolute;left:104.00px;top:126.80px;width:1.80px;height:24.00px;background:#0b2a6b;"></div>
<div class="a" style="left:100.40px;top:146.20px;width:9px;height:9px;border-radius:50%;background:#1f5fcf;border:1px solid #fff;z-index:5"></div>
<div class="a" style="left:0;top:153.6px;width:1878px;height:671.40px;overflow:hidden">
<div class="a" style="left:34.5px;top:-0.40px;width:95.70px;height:676.00px;background:#000"></div>
<div class="a" style="left:133.3px;top:-0.40px;width:1732.60px;height:676.00px;background:#000"></div>
<div class="a" style="left:36.30px;top:1.60px;width:67.90px;height:98.20px;background:#fff2cc"></div>
<div class="a" style="left:106.20px;top:1.60px;width:23.00px;height:98.20px;background:#00ffff;overflow:hidden"></div>
<div class="a" style="left:139.00px;top:1.60px;width:1498.00px;height:98.20px;background:#fff2cc"></div>
<div class="a" style="left:1643.60px;top:1.60px;width:219.50px;height:98.20px;background:#fff2cc"></div>
<div class="t" style="left:141.90px;top:0.65px"><span class="r">&quot;Let me see that...I knew way back then!....I knew way back then!...Man, I&#x27;m fucked up...Can you give me $20 so I can buy a phone? I asked them for one but they don&#x27;t know...&quot;</span> - Hobo (AA) in front</div>
<div class="t" style="left:141.90px;top:20.25px">of MetroPCS in his mid-30s and covered in tattoos came up to me and my client who I was showing a guitar to, he grabbed the guitar and strummed it like DJ Khaled and repeated the same</div>
<div class="t" style="left:141.90px;top:39.25px">sentence in song. Then he asked for money, he was persistent until both my client and I managed to get into our respective vehicles and drive off. He was drugged up and staggering, first time</div>
<div class="t" style="left:141.90px;top:58.95px">ever encountering a vagrant at this location. Sure, the weed shop is behind the MetroPCS next to the convenience store but no sketchy people are ever at the MetroPCS. Since I was 15 years old</div>
<div class="t" style="left:141.90px;top:78.45px">selling things, odd.</div>
<div class="t" style="left:36.50px;width:66.60px;text-align:right;top:78.65px;color:#1155cc;text-decoration:underline;">1/1/25</div>
<div class="a" style="left:106.20px;top:1.60px;width:23.00px;height:98.20px;overflow:hidden"><div class="t" style="left:2.80px;top:77.05px">W</div></div>
<div class="t" style="left:1644.60px;width:219.50px;text-align:center;font-size:18px;line-height:22px;top:39.80px">Hobo</div>
<div class="a" style="left:36.30px;top:101.80px;width:67.90px;height:21.90px;background:#fff2cc"></div>
<div class="a" style="left:106.20px;top:101.80px;width:23.00px;height:21.90px;background:#00ffff;overflow:hidden"></div>
<div class="a" style="left:139.00px;top:101.80px;width:1498.00px;height:21.90px;background:#fff2cc"></div>
<div class="a" style="left:1643.60px;top:101.80px;width:219.50px;height:21.90px;background:#ff9900"></div>
<div class="t" style="left:141.90px;top:102.35px"><span class="r">&quot;We&#x27;re going to Montpellier this year, January 28th to Febraury 2nd&quot;</span> - Pavlov over email</div>
<div class="t" style="left:36.50px;width:66.60px;text-align:right;top:102.55px;">1/2/25</div>
<div class="a" style="left:106.20px;top:101.80px;width:23.00px;height:21.90px;overflow:hidden"><div class="t" style="left:4.10px;top:0.75px">Th</div></div>
<div class="t" style="left:1644.60px;width:219.50px;text-align:center;font-size:18px;line-height:22px;top:101.85px">Pavlov</div>
<div class="a" style="left:36.30px;top:125.70px;width:67.90px;height:38.90px;background:#fff2cc"></div>
<div class="a" style="left:106.20px;top:125.70px;width:23.00px;height:38.90px;background:#00ffff;overflow:hidden"></div>
<div class="a" style="left:139.00px;top:125.70px;width:1498.00px;height:38.90px;background:#fff2cc"></div>
<div class="a" style="left:1643.60px;top:125.70px;width:219.50px;height:38.90px;background:#4a86e8"></div>
<div class="t" style="left:141.90px;top:124.25px"><span class="r">&quot;En vez de apuntar qué comiste o cuándo cagaste, ponte a trabajar!&quot;</span> - Dan when I casually mentioned that he gives a cold shoulder to my life tracking excel sheets, he sees the fact that I let other</div>
<div class="t" style="left:141.90px;top:144.45px">things slide to make time for wastes of time</div>
<div class="t" style="left:36.50px;width:66.60px;text-align:right;top:144.65px;">1/3/25</div>
<div class="a" style="left:106.20px;top:125.70px;width:23.00px;height:38.90px;overflow:hidden"><div class="t" style="left:2.80px;top:18.95px">F</div></div>
<div class="t" style="left:1644.60px;width:219.50px;text-align:center;font-size:18px;line-height:22px;top:134.25px">Dan</div>
<div class="a" style="left:36.30px;top:166.60px;width:67.90px;height:21.90px;background:#a64d79"></div>
<div class="a" style="left:106.20px;top:166.60px;width:23.00px;height:21.90px;background:#00ffff;overflow:hidden"></div>
<div class="a" style="left:139.00px;top:166.60px;width:1498.00px;height:21.90px;background:#fff2cc"></div>
<div class="a" style="left:1643.60px;top:166.60px;width:219.50px;height:21.90px;background:#cc4125"></div>
<div class="t" style="left:141.90px;top:167.35px"><span class="r">&quot;That flight was surreal. I didn&#x27;t have the window seat but I still saw the clouds and the sky. Wow.&quot;</span> - Joseph describing his first flight.</div>
<div class="t" style="left:36.50px;width:66.60px;text-align:right;top:167.55px;">1/4/25</div>
<div class="a" style="left:106.20px;top:166.60px;width:23.00px;height:21.90px;overflow:hidden"><div class="t" style="left:3.60px;top:0.95px">Sa</div></div>
<div class="t" style="left:1644.60px;width:219.50px;text-align:center;font-size:18px;line-height:22px;top:166.65px">Joseph</div>
<div class="a" style="left:36.30px;top:190.50px;width:67.90px;height:39.10px;background:#a64d79"></div>
<div class="a" style="left:106.20px;top:190.50px;width:23.00px;height:39.10px;background:#00ffff;overflow:hidden"></div>
<div class="a" style="left:139.00px;top:190.50px;width:1498.00px;height:39.10px;background:#fff2cc"></div>
<div class="a" style="left:1643.60px;top:190.50px;width:219.50px;height:39.10px;background:#ff9900"></div>
<div class="t" style="left:141.90px;top:189.25px"><span class="r">&quot;You&#x27;ve been much more introverted lately, usually you&#x27;ve got so much energy&quot;</span> and <span class="r">&quot;I understand that you&#x27;re doing things, no need to explain anything to me. You got dedication, I respect that&quot;</span> -</div>
<div class="t" style="left:141.90px;top:209.35px">Pilar at the convention and while we drove around, I was tired today and wanted to use as much time as possible to work on improving my excel sheets.</div>
<div class="t" style="left:36.50px;width:66.60px;text-align:right;top:209.55px;">1/5/25</div>
<div class="a" style="left:106.20px;top:190.50px;width:23.00px;height:39.10px;overflow:hidden"><div class="t" style="left:3.60px;top:19.05px">Su</div></div>
<div class="t" style="left:1644.60px;width:219.50px;text-align:center;font-size:18px;line-height:22px;top:199.15px">Pilar</div>
<div class="a" style="left:36.30px;top:231.60px;width:67.90px;height:5.40px;background:#a64d79"></div>
<div class="a" style="left:36.30px;top:239.20px;width:67.90px;height:22.30px;background:#fff2cc"></div>
<div class="a" style="left:106.20px;top:239.20px;width:23.00px;height:22.30px;background:#00ff00;overflow:hidden"></div>
<div class="a" style="left:139.00px;top:239.20px;width:1498.00px;height:22.30px;background:#fff2cc"></div>
<div class="a" style="left:1643.60px;top:239.20px;width:219.50px;height:22.30px;background:#fff2cc"></div>
<div class="t" style="left:141.90px;top:240.45px"><span class="r">&quot;Sir, I am Martin Luther King&quot;</span> - MLK ... <span class="r">&quot;And I&#x27;m Malcolm X. You still ain&#x27;t gettin&#x27; in here with them shoes...&quot;</span> - Bouncer ... From the Episode of the Boondocks with MLK returning from a coma</div>
<div class="t" style="left:36.50px;width:66.60px;text-align:right;top:240.65px;">1/6/25</div>
<div class="a" style="left:106.20px;top:239.20px;width:23.00px;height:22.30px;overflow:hidden"><div class="t" style="left:2.80px;top:1.45px">M</div></div>
<div class="t" style="left:1644.60px;width:219.50px;text-align:center;font-size:18px;line-height:22px;top:239.45px">MLK</div>
<div class="a" style="left:36.30px;top:263.50px;width:67.90px;height:59.10px;background:#fff2cc"></div>
<div class="a" style="left:106.20px;top:263.50px;width:23.00px;height:59.10px;background:#00ff00;overflow:hidden"></div>
<div class="a" style="left:139.00px;top:263.50px;width:1498.00px;height:59.10px;background:#fff2cc"></div>
<div class="a" style="left:1643.60px;top:263.50px;width:219.50px;height:59.10px;background:#cc4125"></div>
<div class="t" style="left:141.90px;top:263.35px"><span class="r">&quot;I hate this, there&#x27;s nothing positive about snow. We had our fun, let&#x27;s go. This isn&#x27;t fun and I could never do it again in my life and I&#x27;d be ok. You think that everything has a positive, is there</span></div>
<div class="t" style="left:141.90px;top:282.25px"><span class="r">anything positive about a plane crash?&quot;</span> - Joseph after our frolic in the Winter Wonderland of Rock Creek Park, he got cold feet (literally) and argued with me. I loved the snow and could have spent</div>
<div class="t" style="left:141.90px;top:302.35px">the whole day in the forest rolling about and throwing snow balls</div>
<div class="t" style="left:36.50px;width:66.60px;text-align:right;top:302.55px;">1/7/25</div>
<div class="a" style="left:106.20px;top:263.50px;width:23.00px;height:59.10px;overflow:hidden"><div class="t" style="left:4.10px;top:39.05px">Tu</div></div>
<div class="t" style="left:1644.60px;width:219.50px;text-align:center;font-size:18px;line-height:22px;top:282.15px">Joseph</div>
<div class="a" style="left:36.30px;top:324.60px;width:67.90px;height:22.00px;background:#fff2cc"></div>
<div class="a" style="left:106.20px;top:324.60px;width:23.00px;height:22.00px;background:#00ff00;overflow:hidden"></div>
<div class="a" style="left:139.00px;top:324.60px;width:1498.00px;height:22.00px;background:#fff2cc"></div>
<div class="a" style="left:1643.60px;top:324.60px;width:219.50px;height:22.00px;background:#cc4125"></div>
<div class="t" style="left:141.90px;top:325.45px"><span class="r">&quot;You know that when you whisper, you&#x27;re blowing in this morning&#x27;s food in my face!&quot;</span> - Joseph as I sat on the plane with him, didn&#x27;t know about this until he told me...</div>
<div class="t" style="left:36.50px;width:66.60px;text-align:right;top:325.65px;">1/8/25</div>
<div class="a" style="left:106.20px;top:324.60px;width:23.00px;height:22.00px;overflow:hidden"><div class="t" style="left:2.80px;top:1.05px">W</div></div>
<div class="t" style="left:1644.60px;width:219.50px;text-align:center;font-size:18px;line-height:22px;top:324.70px">Joseph</div>
<div class="a" style="left:36.30px;top:348.60px;width:67.90px;height:59.10px;background:#fff2cc"></div>
<div class="a" style="left:106.20px;top:348.60px;width:23.00px;height:59.10px;background:#00ff00;overflow:hidden"></div>
<div class="a" style="left:139.00px;top:348.60px;width:1498.00px;height:59.10px;background:#fff2cc"></div>
<div class="a" style="left:1643.60px;top:348.60px;width:219.50px;height:59.10px;background:#4a86e8"></div>
<div class="t" style="left:141.90px;top:347.85px"><span class="r">&quot;...............................................&quot;</span> - Dan staring at me while we were eating lunch, he stared at me with open eyes for a good 10 seconds in what I thoroughly believe was an attempt to crack my</div>
<div class="t" style="left:141.90px;top:367.35px">resolve in hiding a secret. I&#x27;m almost certain he suspects that we&#x27;ve been hiding the fact of having rented a rental car from him, we share accounts so he most certainly saw &#x27;Sixt Rental&#x27; pop up in</div>
<div class="t" style="left:141.90px;top:386.65px">my account</div>
<div class="t" style="left:36.50px;width:66.60px;text-align:right;top:386.85px;">1/9/25</div>
<div class="a" style="left:106.20px;top:348.60px;width:23.00px;height:59.10px;overflow:hidden"><div class="t" style="left:4.10px;top:38.25px">Th</div></div>
<div class="t" style="left:1644.60px;width:219.50px;text-align:center;font-size:18px;line-height:22px;top:367.25px">Dan</div>
<div class="a" style="left:36.30px;top:409.70px;width:67.90px;height:22.00px;background:#fff2cc"></div>
<div class="a" style="left:106.20px;top:409.70px;width:23.00px;height:22.00px;background:#00ff00;overflow:hidden"></div>
<div class="a" style="left:139.00px;top:409.70px;width:1498.00px;height:22.00px;background:#fff2cc"></div>
<div class="a" style="left:1643.60px;top:409.70px;width:219.50px;height:22.00px;background:#ffff00"></div>
<div class="t" style="left:141.90px;top:410.55px"><span class="r">&quot;Ojo que no ve, corazón que no siente...pero yo ya lo vi y me dolió!&quot;</span> - Me , I told Dan the refrán upon him seeing my room and he responded with what&#x27;s after the ellipsis</div>
<div class="t" style="left:36.50px;width:66.60px;text-align:right;top:410.75px;">1/10/25</div>
<div class="a" style="left:106.20px;top:409.70px;width:23.00px;height:22.00px;overflow:hidden"><div class="t" style="left:2.80px;top:1.05px">F</div></div>
<div class="t" style="left:1644.60px;width:219.50px;text-align:center;font-size:18px;line-height:22px;top:409.80px">Me</div>
<div class="a" style="left:36.30px;top:433.70px;width:67.90px;height:38.80px;background:#a64d79"></div>
<div class="a" style="left:106.20px;top:433.70px;width:23.00px;height:38.80px;background:#00ff00;overflow:hidden"></div>
<div class="a" style="left:139.00px;top:433.70px;width:1498.00px;height:38.80px;background:#fff2cc"></div>
<div class="a" style="left:1643.60px;top:433.70px;width:219.50px;height:38.80px;background:#fff2cc"></div>
<div class="t" style="left:141.90px;top:432.75px"><span class="r">&quot;Llevo 22 años en esto pero este año cerre mi negocio&quot;</span> - Guy who sold us his 12&quot; QuickConnect Mini-Ex Bucket in North Dallas, he works in concrete and has had a rough 2024 much like</div>
<div class="t" style="left:141.90px;top:452.35px">everyone else</div>
<div class="t" style="left:36.50px;width:66.60px;text-align:right;top:452.55px;">1/11/25</div>
<div class="a" style="left:106.20px;top:433.70px;width:23.00px;height:38.80px;overflow:hidden"><div class="t" style="left:3.60px;top:18.85px">Sa</div></div>
<div class="t" style="left:1644.60px;width:219.50px;text-align:center;font-size:18px;line-height:22px;top:442.20px">Guy</div>
<div class="a" style="left:36.30px;top:474.50px;width:67.90px;height:38.80px;background:#a64d79"></div>
<div class="a" style="left:106.20px;top:474.50px;width:23.00px;height:38.80px;background:#00ff00;overflow:hidden"></div>
<div class="a" style="left:139.00px;top:474.50px;width:1498.00px;height:38.80px;background:#fff2cc"></div>
<div class="a" style="left:1643.60px;top:474.50px;width:219.50px;height:38.80px;background:#4a86e8"></div>
<div class="t" style="left:141.90px;top:473.35px"><span class="r">&quot;Te voy a dar dos opciones. Quieres trapiar los pisos o limpiar las ventanas?...Esa no es una de las opciones...&quot;</span> - Dan at the SC, I responded by saying that I had painted the fence and could do</div>
<div class="t" style="left:141.90px;top:493.15px">something else besides the two tasks. He responded with the second part playfully, at the end we went home</div>
<div class="t" style="left:36.50px;width:66.60px;text-align:right;top:493.35px;">1/12/25</div>
<div class="a" style="left:106.20px;top:474.50px;width:23.00px;height:38.80px;overflow:hidden"><div class="t" style="left:3.60px;top:18.85px">Su</div></div>
<div class="t" style="left:1644.60px;width:219.50px;text-align:center;font-size:18px;line-height:22px;top:483.00px">Dan</div>
<div class="a" style="left:36.30px;top:515.30px;width:67.90px;height:5.80px;background:#a64d79"></div>
<div class="a" style="left:36.30px;top:523.30px;width:67.90px;height:39.50px;background:#fff2cc"></div>
<div class="a" style="left:106.20px;top:523.30px;width:23.00px;height:39.50px;background:#00ffff;overflow:hidden"></div>
<div class="a" style="left:139.00px;top:523.30px;width:1498.00px;height:39.50px;background:#fff2cc"></div>
<div class="a" style="left:1643.60px;top:523.30px;width:219.50px;height:39.50px;background:#cc4125"></div>
<div class="t" style="left:141.90px;top:522.35px"><span class="r">&quot;We&#x27;re both idiots...I spent 20 minutes talking to the guys at Bernie&#x27;s Pawn Shop and they told me that we threw out so much gold. Those gold-plated utensils that you wanted to throw away? They</span></div>
<div class="t" style="left:141.90px;top:542.45px"><span class="r">sold a box of those for $4000 on Ebay. Also, shoes that are missing the other shoe sell too. Everything sells, even the things you think are garbage&quot;</span> - Joseph once he arrived home at 7:40pm</div>
<div class="t" style="left:36.50px;width:66.60px;text-align:right;top:542.65px;">1/13/25</div>
<div class="a" style="left:106.20px;top:523.30px;width:23.00px;height:39.50px;overflow:hidden"><div class="t" style="left:2.80px;top:19.35px">M</div></div>
<div class="t" style="left:1644.60px;width:219.50px;text-align:center;font-size:18px;line-height:22px;top:532.15px">Joseph</div>
<div class="a" style="left:36.30px;top:564.80px;width:67.90px;height:22.00px;background:#fff2cc"></div>
<div class="a" style="left:106.20px;top:564.80px;width:23.00px;height:22.00px;background:#00ffff;overflow:hidden"></div>
<div class="a" style="left:139.00px;top:564.80px;width:1498.00px;height:22.00px;background:#fff2cc"></div>
<div class="a" style="left:1643.60px;top:564.80px;width:219.50px;height:22.00px;background:#cc4125"></div>
<div class="t" style="left:141.90px;top:565.45px"><span class="r">&quot;It&#x27;s only $850, that&#x27;s a week of work. They should be able to get my passport in time&quot;</span> - Joseph after purchasing his plane ticket to France</div>
<div class="t" style="left:36.50px;width:66.60px;text-align:right;top:565.65px;">1/14/25</div>
<div class="a" style="left:106.20px;top:564.80px;width:23.00px;height:22.00px;overflow:hidden"><div class="t" style="left:4.10px;top:0.85px">Tu</div></div>
<div class="t" style="left:1644.60px;width:219.50px;text-align:center;font-size:18px;line-height:22px;top:564.90px">Joseph</div>
<div class="a" style="left:36.30px;top:588.80px;width:67.90px;height:21.90px;background:#fff2cc"></div>
<div class="a" style="left:106.20px;top:588.80px;width:23.00px;height:21.90px;background:#00ffff;overflow:hidden"></div>
<div class="a" style="left:139.00px;top:588.80px;width:1498.00px;height:21.90px;background:#fff2cc"></div>
<div class="a" style="left:1643.60px;top:588.80px;width:219.50px;height:21.90px;background:#ff9900"></div>
<div class="t" style="left:141.90px;top:589.25px"><span class="r">&quot;For the trip, we&#x27;ll be in Montpellier for just 2 days&quot;</span> - Mike explaining that we&#x27;ve only got 2 actual work days on the trip in France, the rest of the time I&#x27;m free to explore about</div>
<div class="t" style="left:36.50px;width:66.60px;text-align:right;top:589.45px;">1/15/25</div>
<div class="a" style="left:106.20px;top:588.80px;width:23.00px;height:21.90px;overflow:hidden"><div class="t" style="left:2.80px;top:0.65px">W</div></div>
<div class="t" style="left:1644.60px;width:219.50px;text-align:center;font-size:18px;line-height:22px;top:588.85px">Mike</div>
<div class="a" style="left:36.30px;top:612.70px;width:67.90px;height:22.00px;background:#fff2cc"></div>
<div class="a" style="left:106.20px;top:612.70px;width:23.00px;height:22.00px;background:#00ffff;overflow:hidden"></div>
<div class="a" style="left:139.00px;top:612.70px;width:1498.00px;height:22.00px;background:#fff2cc"></div>
<div class="a" style="left:1643.60px;top:612.70px;width:219.50px;height:22.00px;background:#fff2cc"></div>
<div class="t" style="left:141.90px;top:613.35px"><span class="r">&quot;Hey&quot;</span> - Jocelyn Montero , Soft, dejected, tired. Walking down the stairs in response to my greeting, sounds like her workload is crushing her</div>
<div class="t" style="left:36.50px;width:66.60px;text-align:right;top:613.55px;">1/16/25</div>
<div class="a" style="left:106.20px;top:612.70px;width:23.00px;height:22.00px;overflow:hidden"><div class="t" style="left:4.10px;top:0.85px">Th</div></div>
<div class="t" style="left:1644.60px;width:219.50px;text-align:center;font-size:18px;line-height:22px;top:612.80px">Jocelyn</div>
<div class="a" style="left:36.30px;top:636.70px;width:67.90px;height:39.70px;background:#fff2cc"></div>
<div class="a" style="left:106.20px;top:636.70px;width:23.00px;height:39.70px;background:#00ffff;overflow:hidden"></div>
<div class="a" style="left:139.00px;top:636.70px;width:1498.00px;height:39.70px;background:#fff2cc"></div>
<div class="a" style="left:1643.60px;top:636.70px;width:219.50px;height:39.70px;background:#fff2cc"></div>
<div class="t" style="left:141.90px;top:635.55px"><span class="r">&quot;Ya estamos guardando todo, con este aigre no se vende nada&quot;</span> - Lady at a garage sale that was being packed up at the early hour of 1pm. I still perused her wares but found nothing of interest.</div>
<div class="t" style="left:141.90px;top:654.75px">Wrote this down as the quote of the day because of her use of &#x27;aigre&#x27;, one could argue that it&#x27;s bad Spanish but Mexican Spanish has these archaic forms that were correct hundreds of years ago.</div>
</div>
<div style="position:absolute;left:1865.90px;top:108.60px;width:12.10px;height:716.40px;background:#f9fbfd;"></div>
<div style="position:absolute;left:1865.90px;top:150.80px;width:12.10px;height:2.80px;background:#c8c8c8;"></div>
</body></html>
